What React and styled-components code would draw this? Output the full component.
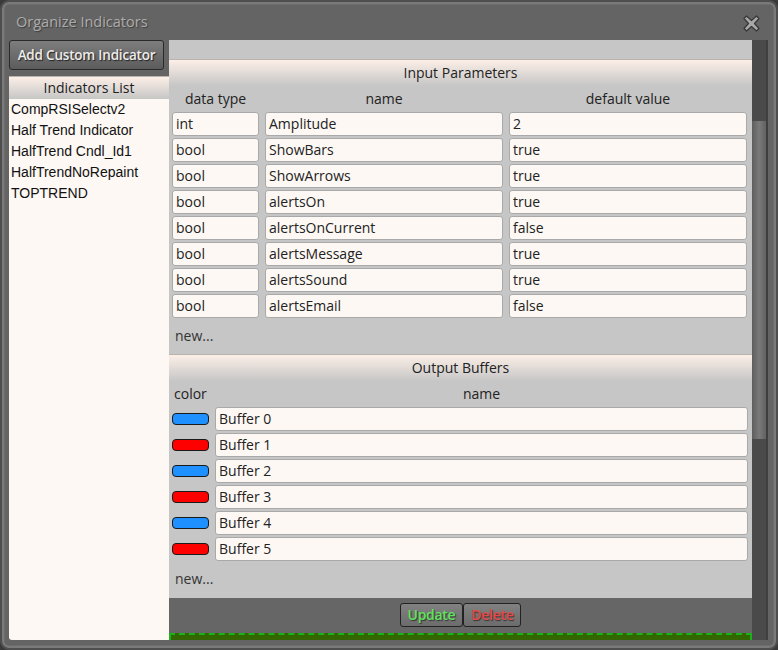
import React from 'react';
import styled, { createGlobalStyle } from 'styled-components';

const GlobalStyle = createGlobalStyle`
  html, body {
    margin: 0;
    padding: 0;
    background: #3a3a3a;
  }
  * {
    box-sizing: border-box;
  }
`;

const indicators = [
  'CompRSISelectv2',
  'Half Trend Indicator',
  'HalfTrend Cndl_Id1',
  'HalfTrendNoRepaint',
  'TOPTREND'
];

const params = [
  { type: 'int', name: 'Amplitude', value: '2' },
  { type: 'bool', name: 'ShowBars', value: 'true' },
  { type: 'bool', name: 'ShowArrows', value: 'true' },
  { type: 'bool', name: 'alertsOn', value: 'true' },
  { type: 'bool', name: 'alertsOnCurrent', value: 'false' },
  { type: 'bool', name: 'alertsMessage', value: 'true' },
  { type: 'bool', name: 'alertsSound', value: 'true' },
  { type: 'bool', name: 'alertsEmail', value: 'false' }
];

const buffers = [
  { name: 'Buffer 0', color: '#1e90ff' },
  { name: 'Buffer 1', color: '#ff0000' },
  { name: 'Buffer 2', color: '#1e90ff' },
  { name: 'Buffer 3', color: '#ff0000' },
  { name: 'Buffer 4', color: '#1e90ff' },
  { name: 'Buffer 5', color: '#ff0000' }
];

const CloseIcon = () => (
  <svg width="17" height="17" viewBox="0 0 17 17">
    <path
      d="M3.5 1 L8.5 5.5 L13.5 1 L16 3.5 L11.5 8.5 L16 13.5 L13.5 16 L8.5 11.5 L3.5 16 L1 13.5 L5.5 8.5 L1 3.5 Z"
      fill="#a8a8a8"
      stroke="#383838"
      strokeWidth="1.3"
      strokeLinejoin="round"
    />
  </svg>
);

const App = () => (
  <>
    <GlobalStyle />
    <Window>
      <TitleBar>
        <Title>Organize Indicators</Title>
        <CloseButton>
          <CloseIcon />
        </CloseButton>
      </TitleBar>
      <Body>
        <LeftCol>
          <AddButton>Add Custom Indicator</AddButton>
          <ListPanel>
            <SectionHeader height={23}>Indicators List</SectionHeader>
            <IndicatorList>
              {indicators.map(name => (
                <li key={name}>{name}</li>
              ))}
            </IndicatorList>
          </ListPanel>
        </LeftCol>
        <RightCol>
          <Content>
            <SectionHeader height={27}>Input Parameters</SectionHeader>
            <ParamGrid>
              <ColHead>data type</ColHead>
              <ColHead>name</ColHead>
              <ColHead>default value</ColHead>
              {params.map(p => (
                <React.Fragment key={p.name}>
                  <Field>{p.type}</Field>
                  <Field>{p.name}</Field>
                  <Field>{p.value}</Field>
                </React.Fragment>
              ))}
            </ParamGrid>
            <NewLink>new...</NewLink>
            <SectionHeader height={27}>Output Buffers</SectionHeader>
            <BufferGrid>
              <ColHead align="left">color</ColHead>
              <ColHead>name</ColHead>
              {buffers.map(b => (
                <React.Fragment key={b.name}>
                  <SwatchCell>
                    <Swatch color={b.color} />
                  </SwatchCell>
                  <Field>{b.name}</Field>
                </React.Fragment>
              ))}
            </BufferGrid>
            <NewLink>new...</NewLink>
          </Content>
          <Footer>
            <ActionButton tone="#5fe35f">Update</ActionButton>
            <ActionButton tone="#e54a4a">Delete</ActionButton>
          </Footer>
          <DropStrip />
        </RightCol>
        <Scrollbar>
          <ScrollThumb />
        </Scrollbar>
      </Body>
    </Window>
  </>
);

export default App;

// Styled Components

const Window = styled.div`
  width: 778px;
  height: 650px;
  background: #646464;
  border-radius: 9px;
  border: 2px solid #4e4e4e;
  box-shadow: inset 0 0 0 2px #7a7a7a, inset 0 0 0 3px #6c6c6c;
  padding: 0 8px 8px 7px;
  display: flex;
  flex-direction: column;
  font-family: 'Open Sans', 'Noto Sans', sans-serif;
  overflow: hidden;
`;

const TitleBar = styled.div`
  height: 38px;
  display: flex;
  align-items: center;
  justify-content: space-between;
  padding: 0 8px 0 7px;
`;

const Title = styled.div`
  font-size: 14.5px;
  color: #adadad;
  text-shadow: 1px 1px 1px #3e3e3e;
  margin-top: 1px;
`;

const CloseButton = styled.div`
  width: 17px;
  height: 17px;
  display: flex;
  margin-top: 5px;
`;

const Body = styled.div`
  flex: 1;
  display: flex;
  min-height: 0;
`;

const LeftCol = styled.div`
  width: 160px;
  display: flex;
  flex-direction: column;
`;

const AddButton = styled.div`
  width: 155px;
  height: 30px;
  border: 1px solid #2a2a2a;
  border-radius: 3px;
  background: linear-gradient(#7d7d7d, #5c5c5c);
  color: #ececec;
  font-size: 13.5px;
  font-weight: 600;
  letter-spacing: -0.2px;
  display: flex;
  align-items: center;
  justify-content: center;
  text-shadow: 1px 1px 1px #222;
  margin-bottom: 6px;
`;

const ListPanel = styled.div`
  flex: 1;
  background: #fdf8f4;
  border-radius: 3px 0 0 3px;
`;

const SectionHeader = styled.div`
  height: ${p => p.height}px;
  background: linear-gradient(#fcefe7, #c6c6c6);
  border-top: 1px solid #b9b2ae;
  font-size: 14px;
  color: #222;
  display: flex;
  align-items: center;
  justify-content: center;
  padding-bottom: 2px;
`;

const IndicatorList = styled.ul`
  list-style: none;
  margin: 0;
  padding: 0 0 0 2px;
  font-family: 'Liberation Sans', Arial, sans-serif;
  font-size: 14px;
  color: #111;

  li {
    height: 21px;
    line-height: 21px;
  }
`;

const RightCol = styled.div`
  flex: 1;
  display: flex;
  flex-direction: column;
  min-width: 0;
`;

const Content = styled.div`
  flex: 1;
  background: #c6c6c6;
  padding-top: 19px;
  display: flex;
  flex-direction: column;
`;

const ParamGrid = styled.div`
  display: grid;
  grid-template-columns: 87px 1fr 1fr;
  grid-auto-rows: 24px;
  column-gap: 6px;
  row-gap: 2px;
  padding: 0 5px 0 3px;
`;

const BufferGrid = styled.div`
  display: grid;
  grid-template-columns: 37px 1fr;
  grid-auto-rows: 24px;
  column-gap: 6px;
  row-gap: 2px;
  padding: 0 4px 0 3px;
`;

const ColHead = styled.div`
  font-size: 14px;
  color: #222;
  text-align: ${p => p.align || 'center'};
  line-height: 25px;
  padding-left: ${p => (p.align === 'left' ? '2px' : '0')};
`;

const Field = styled.div`
  background: #fdf8f4;
  border: 1px solid #a9a9a9;
  border-radius: 3px;
  font-size: 14px;
  color: #222;
  padding-left: 3px;
  line-height: 22px;
  white-space: nowrap;
  overflow: hidden;
`;

const SwatchCell = styled.div`
  display: flex;
  align-items: center;
`;

const Swatch = styled.div`
  width: 37px;
  height: 12px;
  border: 1px solid #1a1a1a;
  border-radius: 4px;
  background: ${p => p.color};
`;

const NewLink = styled.div`
  height: 36px;
  font-size: 14px;
  color: #333;
  padding: 0 0 1px 6px;
  display: flex;
  align-items: center;
`;

const Footer = styled.div`
  height: 35px;
  background: #666;
  display: flex;
  justify-content: center;
  align-items: flex-start;
  padding-top: 5px;
`;

const ActionButton = styled.div`
  height: 24px;
  padding: 0 7px;
  border: 1px solid #222;
  border-radius: 3px;
  background: linear-gradient(#818181, #6c6c6c);
  color: ${p => p.tone};
  font-size: 14px;
  font-weight: 600;
  letter-spacing: -0.3px;
  line-height: 22px;
  text-shadow: 1px 1px 1px #333;
`;

const DropStrip = styled.div`
  height: 7px;
  background: #336600;
  border: 2px dashed #19b319;
  border-bottom: none;
`;

const Scrollbar = styled.div`
  width: 16px;
  background: #4a4a4a;
  border-right: 2px solid #3f3f3f;
  padding-top: 81px;
`;

const ScrollThumb = styled.div`
  height: 318px;
  background: linear-gradient(90deg, #5e5e5e, #7a7a7a 50%, #626262);
`;
